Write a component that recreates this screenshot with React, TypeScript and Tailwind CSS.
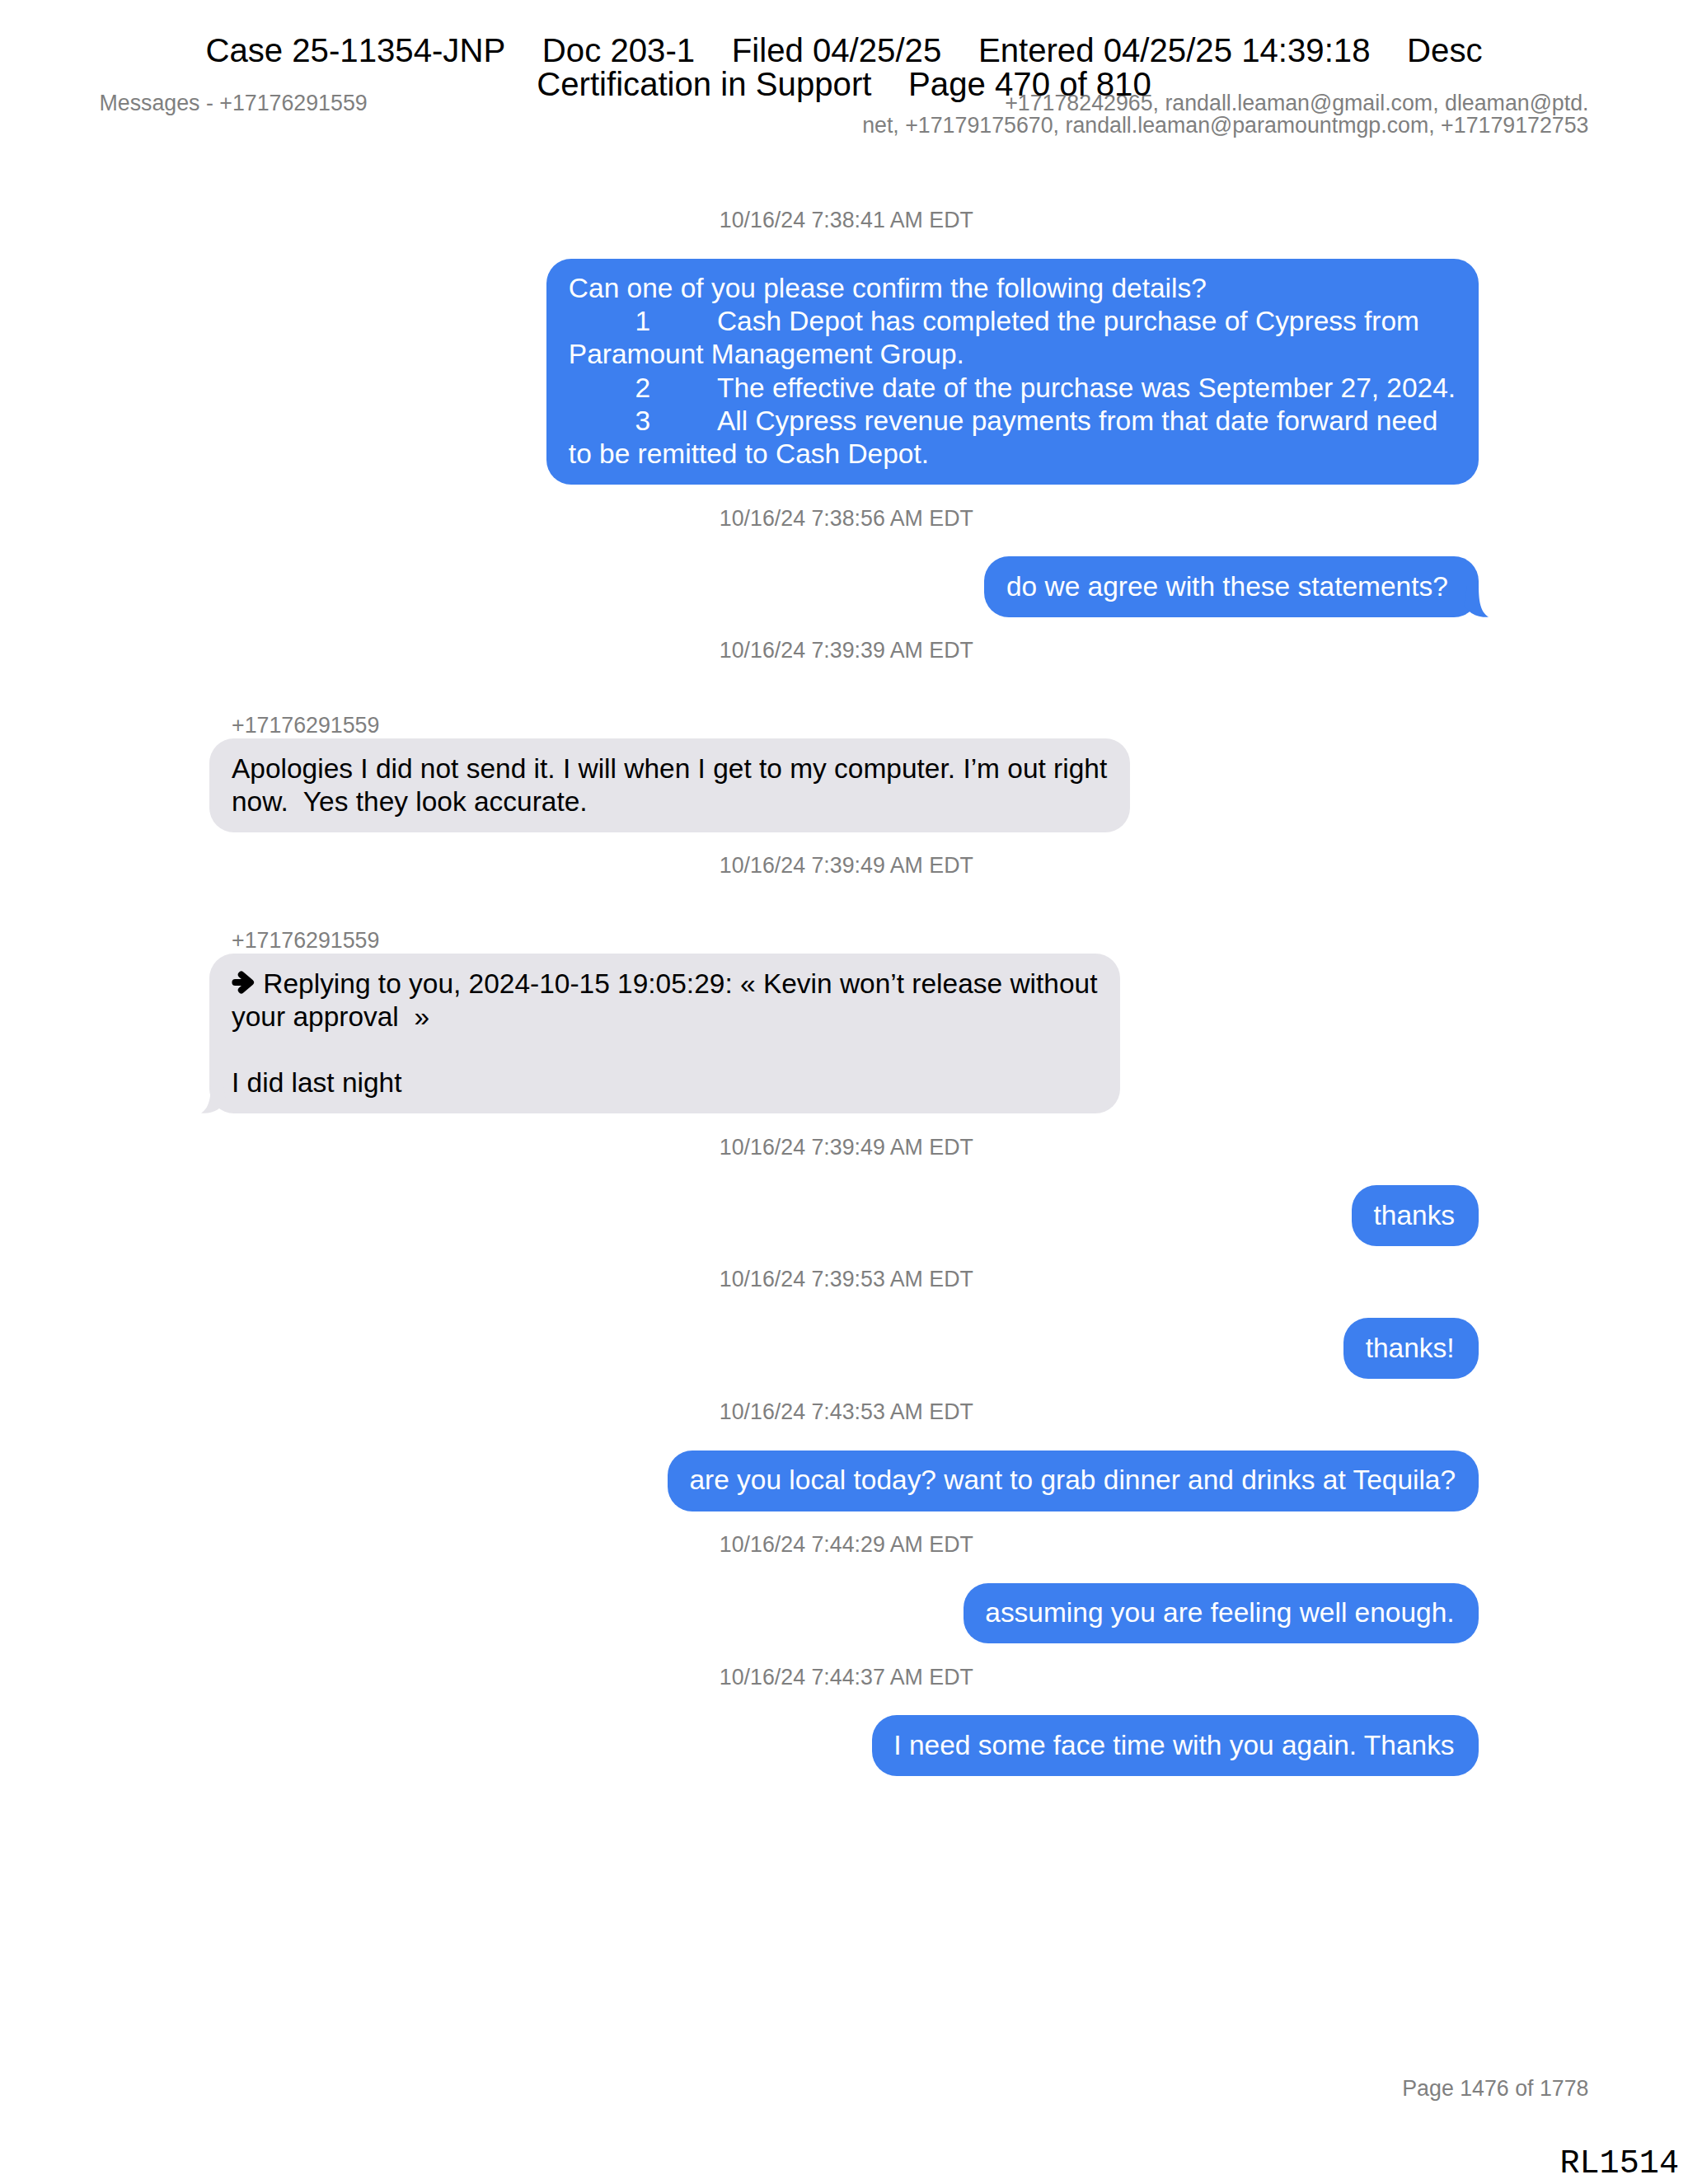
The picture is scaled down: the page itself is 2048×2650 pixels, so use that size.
import type { ReactNode } from "react";

type Message = {
  time: string;
  sender?: string;
  tail?: boolean;
  body: ReactNode;
};

function ListMarker({ value }: { value: string }) {
  return <span className="inline-block w-[180.1px] pl-[80.6px]">{value}</span>;
}

function ReplyArrow() {
  return (
    <svg viewBox="0 0 28 28" className="mt-[-8px] mr-px inline-block h-[28px] w-[28px] align-middle">
      <path d="M4.4 14H20M11.8 4.6L23 14L11.8 23.4" fill="none" stroke="black" strokeWidth="8" strokeLinecap="round" strokeLinejoin="round" />
    </svg>
  );
}

const messages: Message[] = [
  {
    time: "10/16/24 7:38:41 AM EDT",
    body: (
      <>
        <p>Can one of you please confirm the following details?</p>
        <p>
          <ListMarker value="1" />
          Cash Depot has completed the purchase of Cypress from
        </p>
        <p>Paramount Management Group.</p>
        <p>
          <ListMarker value="2" />
          The effective date of the purchase was September 27, 2024.
        </p>
        <p>
          <ListMarker value="3" />
          All Cypress revenue payments from that date forward need
        </p>
        <p>to be remitted to Cash Depot.</p>
      </>
    ),
  },
  { time: "10/16/24 7:38:56 AM EDT", tail: true, body: "do we agree with these statements? " },
  {
    time: "10/16/24 7:39:39 AM EDT",
    sender: "+17176291559",
    body: (
      <>
        <p>Apologies I did not send it. I will when I get to my computer. I’m out right</p>
        <p>{"now.  Yes they look accurate."}</p>
      </>
    ),
  },
  {
    time: "10/16/24 7:39:49 AM EDT",
    sender: "+17176291559",
    tail: true,
    body: (
      <>
        <p>
          <ReplyArrow />
          {" Replying to you, 2024-10-15 19:05:29: « Kevin won’t release without"}
        </p>
        <p>{"your approval  »"}</p>
        <p className="mt-[40.16px]">I did last night</p>
      </>
    ),
  },
  { time: "10/16/24 7:39:49 AM EDT", body: <p className="pr-px">thanks</p> },
  { time: "10/16/24 7:39:53 AM EDT", body: <p className="pr-[1.5px]">thanks!</p> },
  { time: "10/16/24 7:43:53 AM EDT", body: "are you local today? want to grab dinner and drinks at Tequila?" },
  { time: "10/16/24 7:44:29 AM EDT", body: <p className="pr-[1.5px]">assuming you are feeling well enough.</p> },
  { time: "10/16/24 7:44:37 AM EDT", body: <p className="pr-[1.5px]">I need some face time with you again. Thanks</p> },
];

function Tail({ side }: { side: "left" | "right" }) {
  return (
    <svg
      viewBox="0 0 32 40"
      className={
        side === "right"
          ? "absolute right-[-12px] bottom-0 h-[40px] w-[32px] fill-[#3d7fef]"
          : "absolute bottom-0 left-[-10px] h-[40px] w-[32px] -scale-x-100 fill-[#e5e4e9]"
      }
    >
      <path d="M20 2C20 23 23 34 32 39.6C23 40.6 15 38 9.5 33.5L2 26L6 2Z" />
    </svg>
  );
}

function Bubble({ message }: { message: Message }) {
  const incoming = Boolean(message.sender);

  return (
    <div
      className={
        incoming
          ? "relative w-fit rounded-[30px] bg-[#e5e4e9] pt-[16.4px] pr-[28px] pb-[17.2px] pl-[27px] text-black"
          : "relative ml-auto w-fit rounded-[30px] bg-[#3d7fef] pt-[16.4px] pr-[27.6px] pb-[17.2px] pl-[26.6px] text-white"
      }
    >
      {message.tail ? <Tail side={incoming ? "left" : "right"} /> : null}
      <div className="relative text-[33.47px] leading-[40.16px] whitespace-pre">{message.body}</div>
    </div>
  );
}

export default function App() {
  return (
    <div className="relative flex h-[2650px] w-[2048px] flex-col overflow-hidden bg-white font-['Liberation_Sans',Arial,sans-serif] text-[26.77px] leading-[27px] text-[#7f7f7f]">
      {/* court filing stamp, printed over the page header */}
      <div className="absolute top-[42.4px] left-0 w-full text-center text-[40.16px] leading-[40.16px] whitespace-pre text-black [font-kerning:none]">
        <p>{"Case 25-11354-JNP    Doc 203-1    Filed 04/25/25    Entered 04/25/25 14:39:18    Desc"}</p>
        <p>{"Certification in Support    Page 470 of 810"}</p>
      </div>

      <header className="flex justify-between px-[120.5px] pt-[111.5px]">
        <p>Messages - +17176291559</p>
        <div className="text-right">
          <p>+17178242965, randall.leaman@gmail.com, dleaman@ptd.</p>
          <p>net, +17179175670, randall.leaman@paramountmgp.com, +17179172753</p>
        </div>
      </header>

      <main className="mt-[61.3px] flex-1 pr-[254.3px] pl-[254px]">
        {messages.map((message, index) => (
          <section key={index} className="pt-[27.3px]">
            <p className="pl-[6px] text-center">{message.time}</p>
            {message.sender ? <p className="mt-[63.2px] mb-[2.7px] pl-[27px]">{message.sender}</p> : <div className="h-[32.7px]" />}
            <Bubble message={message} />
          </section>
        ))}
      </main>

      <footer>
        <p className="pr-[120.5px] pb-[57px] text-right">Page 1476 of 1778</p>
        <p className="pr-[11px] pb-[3px] text-right font-['Liberation_Mono','Courier_New',monospace] text-[40.16px] leading-[42px] text-black">RL1514</p>
      </footer>
    </div>
  );
}
